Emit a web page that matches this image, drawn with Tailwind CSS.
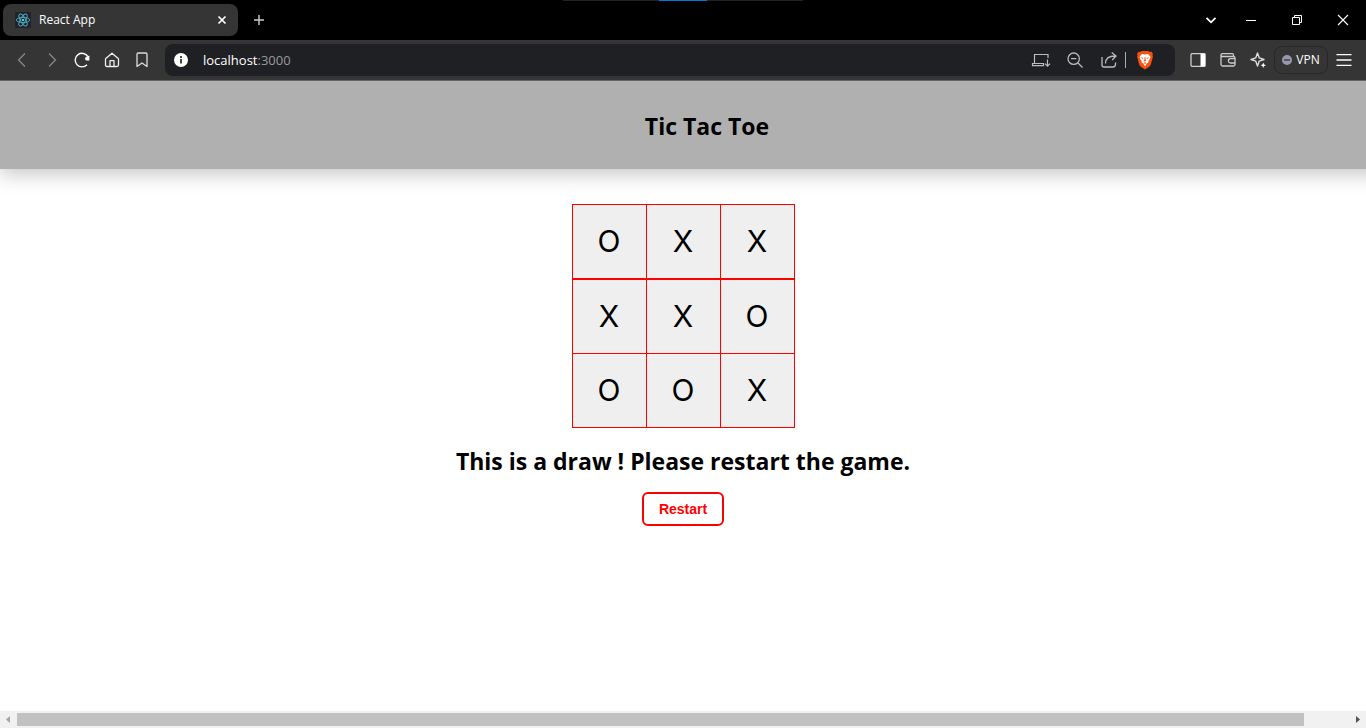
<!DOCTYPE html>
<html lang="en">
<head>
<meta charset="utf-8">
<meta name="viewport" content="width=device-width, initial-scale=1">
<title>React App</title>
<script src="https://cdn.jsdelivr.net/npm/@tailwindcss/browser@4"></script>
</head>
<body class="flex h-screen flex-col overflow-hidden bg-white font-['Open_Sans','Noto_Sans',sans-serif] text-black">

<!-- Tab strip -->
<div class="relative flex h-10 shrink-0 items-center bg-black text-white">
  <div class="absolute top-0 left-1/2 flex h-px w-60 -translate-x-1/2 justify-center bg-[#222]"><span class="h-px w-12 bg-[#0078d7]"></span></div>
  <div class="ml-[3px] flex h-8 w-[235px] items-center rounded-lg bg-[#353535] pr-2 pl-3">
    <svg class="size-4 shrink-0" viewBox="0 0 16 16" fill="none" stroke="#4fa9bf" stroke-width=".9"><rect width="16" height="16" rx="1" fill="#20232a" stroke="none"/><ellipse cx="8" cy="8" rx="6.7" ry="2.6"/><ellipse cx="8" cy="8" rx="6.7" ry="2.6" transform="rotate(60 8 8)"/><ellipse cx="8" cy="8" rx="6.7" ry="2.6" transform="rotate(120 8 8)"/><circle cx="8" cy="8" r="1.3" fill="#58c4dc" stroke="none"/></svg>
    <span class="ml-2 flex-1 text-xs">React App</span>
    <button aria-label="Close tab" class="flex size-4 items-center justify-center"><svg class="size-4" viewBox="0 0 16 16" stroke="#fff" stroke-width="1.7"><path d="M4.5 4.5l7 7M11.5 4.5l-7 7"/></svg></button>
  </div>
  <button aria-label="New tab" class="ml-[13px]"><svg class="size-4" viewBox="0 0 16 16" stroke="#ccc" stroke-width="1.4"><path d="M8 3v10M3 8h10"/></svg></button>
  <div class="ml-auto flex items-center">
    <button aria-label="Search tabs" class="flex w-[34px] justify-center"><svg class="size-4" viewBox="0 0 16 16" fill="none" stroke="#fff" stroke-width="1.8"><path d="M3.5 5.8L8 10.3l4.500-4.500"/></svg></button>
    <button aria-label="Minimize" class="flex w-[46px] justify-center"><svg class="size-4" viewBox="0 0 16 16" stroke="#fff"><path d="M3 8.500h10"/></svg></button>
    <button aria-label="Restore" class="flex w-[46px] justify-center"><svg class="size-4" viewBox="0 0 16 16" fill="none" stroke="#fff"><path d="M3.500 5.500h7v7h-7zM5.500 5.500v-2h7v7h-2"/></svg></button>
    <button aria-label="Close" class="flex w-[46px] justify-center"><svg class="size-4" viewBox="0 0 16 16" stroke="#fff" stroke-width="1.100"><path d="M3 3l10 10M13 3L3 13"/></svg></button>
  </div>
</div>

<!-- Toolbar -->
<div class="flex h-[41px] shrink-0 items-center border-b border-[#666] bg-[#353535] pl-3">
  <div class="flex gap-2.5">
    <button aria-label="Back"><svg class="size-5" viewBox="0 0 20 20" fill="none" stroke="#888" stroke-width="1.300"><path d="M13 3.500L6.500 10l6.500 6.500"/></svg></button>
    <button aria-label="Forward"><svg class="size-5" viewBox="0 0 20 20" fill="none" stroke="#888" stroke-width="1.300"><path d="M7 3.500l6.500 6.500L7 16.500"/></svg></button>
    <button aria-label="Reload"><svg class="size-5" viewBox="0 0 20 20" fill="none" stroke="#fff" stroke-width="1.400"><path d="M15 14.700A6.800 6.800 0 1 1 15.900 6.700"/><path d="M17.400 5.500v5h-3a2 2 0 0 1-.5-3.500z" fill="#fff" stroke="none"/></svg></button>
    <button aria-label="Home"><svg class="size-5" viewBox="0 0 20 20" fill="none" stroke="#eee" stroke-width="1.300" stroke-linejoin="round"><path d="M3.500 8.800L10 3.200l6.500 5.600v6.200q0 1.500-1.500 1.500H5q-1.500 0-1.500-1.500zM8 16.500v-5.800h4v5.800"/></svg></button>
    <button aria-label="Bookmark"><svg class="size-5" viewBox="0 0 20 20" fill="none" stroke="#ddd" stroke-width="1.300" stroke-linejoin="round"><path d="M5 4.300q0-1.300 1.300-1.300h7.400q1.300 0 1.300 1.300v12.200L10 13l-5 3.500z"/></svg></button>
  </div>
  <div class="ml-[13px] flex h-8 flex-1 items-center rounded-lg bg-[#1f2024] px-2">
    <svg class="size-4 shrink-0" viewBox="0 0 16 16"><circle cx="8" cy="8" r="7" fill="#fff"/><path d="M7 7h2v4.500H7zM7 4h2v2H7z" fill="#444"/></svg>
    <a href="#" class="ml-3.5 flex-1 pt-px text-[13px] text-white">localhost<span class="text-[#999]">:3000</span></a>
    <div class="flex items-center gap-3.5">
      <button aria-label="Install app"><svg class="size-5" viewBox="0 0 20 20" fill="none" stroke="#bbb" stroke-width="1.200"><path d="M17 8V4.500H3.500v9M1.500 13.500h11v2.200h-11zM16.500 9.500v6.500M14 13.700l2.500 2.500 2.500-2.500"/></svg></button>
      <button aria-label="Zoom out"><svg class="size-5" viewBox="0 0 20 20" fill="none" stroke="#bbb" stroke-width="1.300"><circle cx="8.700" cy="8.700" r="5.700"/><path d="M13 13l4.500 4.500M6 8.700h5.400"/></svg></button>
      <button aria-label="Share"><svg class="size-5" viewBox="0 0 20 20" fill="none" stroke="#bbb" stroke-width="1.300"><path d="M3 7v8q0 2 2 2h9q2.500 0 2.500-3v-1.500M6.500 13.500c0-5 3-7.500 9.500-7.500M12.700 2.500L17 6l-3.800 4"/></svg></button>
    </div>
    <span class="ml-1.5 h-4 w-px bg-[#aaa]"></span>
    <button aria-label="Brave Shields" class="mr-3 ml-[9px]"><svg class="size-5" viewBox="0 0 20 20"><path d="M5 2l2-1h6l2 1 1.500-.2L18 4l-.6 1.300.5 1.500-2 7.500q-.4 1.500-1.700 2.400L10 19.500l-4.200-2.800q-1.300-.9-1.700-2.400l-2-7.500.5-1.500L2 4l1.500-2.200z" fill="#f8500f"/><path d="M7 4l3 .6L13 4l2.500 2.700-.6 2.200-1.500 2.200.2 1.200-1.800 1.100L10 16.300l-1.800-2.900-1.800-1.100.2-1.200-1.500-2.200-.6-2.200z" fill="#fff"/><path d="M5.600 7.300l3 .8-.7 1zM14.400 7.300l-3 .8.7 1zM9.600 7h.8l.2 3 .9.800-1.500.8-1.500-.8.900-.8zM8.200 13.200l1.800-.9 1.800.9-1.800 .5z" fill="#f8500f"/></svg></button>
  </div>
  <div class="ml-[13px] flex items-center gap-2.5">
    <button aria-label="Side panel"><svg class="size-5" viewBox="0 0 20 20" fill="none" stroke="#ccc" stroke-width="1.300"><rect x="3" y="3.700" width="14" height="12.600" rx="1"/><path d="M12.500 3.500h4.800v13h-4.800z" fill="#fff" stroke="none"/></svg></button>
    <button aria-label="Wallet"><svg class="size-5" viewBox="0 0 20 20" fill="none" stroke="#ccc" stroke-width="1.300"><path d="M15.500 6.500V5q0-1.300-1.300-1.300H4.300Q3 3.700 3 5v9.500Q3 16 4.500 16h11q1.500 0 1.500-1.500V8q0-1.500-1.500-1.500h-11Q3 6.500 3 5M17 8.700h-4.500a2 2 0 0 0 0 4.300H17"/></svg></button>
    <button aria-label="Leo AI"><svg class="size-5" viewBox="0 0 20 20" fill="none" stroke="#ddd" stroke-width="1.400" stroke-linejoin="round"><path d="M9.500 3l1.700 4.800L16 9.500l-4.800 1.700L9.500 16l-1.700-4.800L3 9.500l4.800-1.700z"/><path d="M15.300 12.500l.8 2 2 .8-2 .8-.8 2-.8-2-2-.8 2-.8z" fill="#fff" stroke="none"/></svg></button>
  </div>
  <button class="ml-1.5 flex h-7 w-[54px] items-center justify-center gap-1 rounded-lg border border-[#272727] text-[12px] text-white"><svg class="size-2.5" viewBox="0 0 10 10"><circle cx="5" cy="5" r="5" fill="#9698ae"/><path d="M2 5h6" stroke="#353535" stroke-width="1.300"/></svg>VPN</button>
  <button aria-label="Menu" class="mr-3 ml-1.5"><svg class="size-5" viewBox="0 0 20 20" stroke="#fff" stroke-width="1.300"><path d="M2.500 4.700h15M2.500 10h15M2.500 15.300h15"/></svg></button>
</div>

<div class="flex-1 overflow-hidden">
  <header class="flex h-[88px] w-[calc(100%+48px)] items-center justify-center bg-[#b0b0b0] pt-0.5 shadow-[0_4px_20px_rgba(0,0,0,0.25)]">
    <h1 class="text-[23px] font-bold">Tic Tac Toe</h1>
  </header>
  <main class="mt-[35px] flex flex-col items-center">
    <div class="flex flex-col font-['Inter',sans-serif] text-[30px]">
      <div class="flex -space-x-px">
        <button class="size-[75px] border border-[#f00] bg-[#efefef]">O</button>
        <button class="size-[75px] border border-[#f00] bg-[#efefef]">X</button>
        <button class="size-[75px] border border-[#f00] bg-[#efefef]">X</button>
      </div>
      <div class="flex -space-x-px">
        <button class="size-[75px] border border-[#f00] bg-[#efefef]">X</button>
        <button class="size-[75px] border border-[#f00] bg-[#efefef]">X</button>
        <button class="size-[75px] border border-[#f00] bg-[#efefef]">O</button>
      </div>
      <div class="-mt-px flex -space-x-px">
        <button class="size-[75px] border border-[#f00] bg-[#efefef]">O</button>
        <button class="size-[75px] border border-[#f00] bg-[#efefef]">O</button>
        <button class="size-[75px] border border-[#f00] bg-[#efefef]">X</button>
      </div>
    </div>
    <h2 class="mt-4 text-[23px] leading-[34px] font-bold">This is a draw ! Please restart the game.</h2>
    <button class="mt-3.5 h-[34px] rounded-md border-2 border-[#f00] px-[15px] font-['Liberation_Sans',Arial,sans-serif] text-sm font-bold text-[#f00]">Restart</button>
  </main>
</div>

<!-- Horizontal scrollbar -->
<div class="flex h-[17px] shrink-0 items-center bg-[#f1f1f1]">
  <svg class="size-[17px]" viewBox="0 0 17 17"><path d="M10 5v7L6 8.500z" fill="#a3a3a3"/></svg>
  <div class="flex-1"><div class="h-[13px] w-[96.6%] bg-[#c1c1c1]"></div></div>
  <svg class="size-[17px]" viewBox="0 0 17 17"><path d="M7 5v7l4-3.500z" fill="#505050"/></svg>
</div>
</body>
</html>
